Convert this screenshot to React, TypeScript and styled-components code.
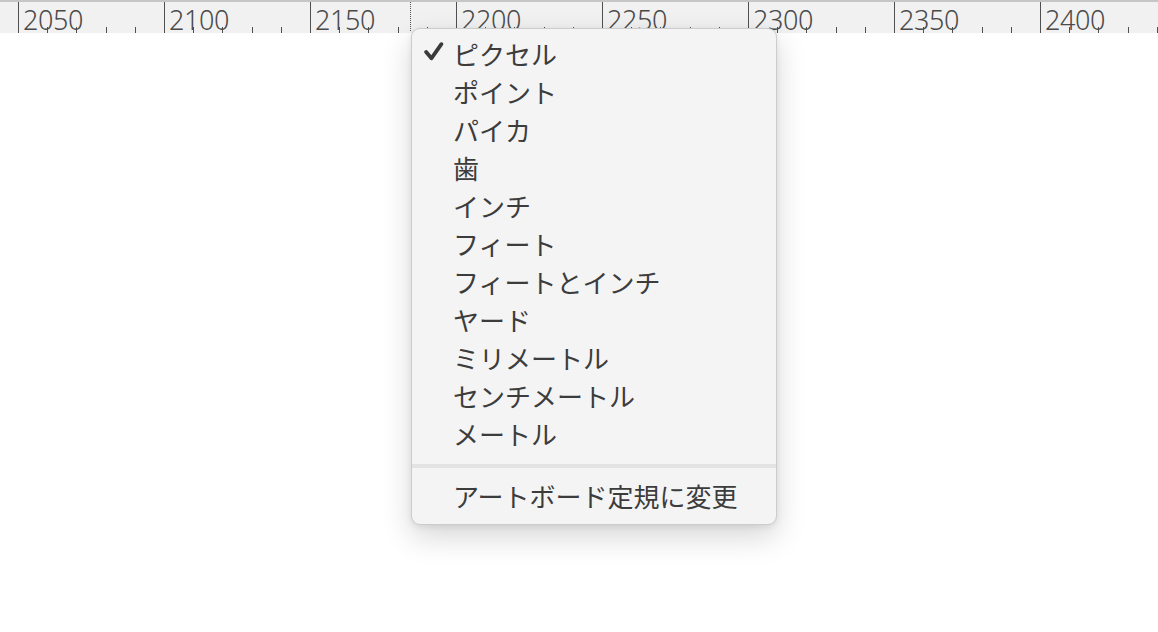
import React from "react";
import styled, { createGlobalStyle } from "styled-components";

const GlobalStyle = createGlobalStyle`
    html, body {
        margin: 0;
        padding: 0;
        background: #ffffff;
        width: 1158px;
        height: 632px;
        overflow: hidden;
    }
    body {
        font-family: "Noto Sans CJK JP", "Noto Sans", sans-serif;
    }
`;

const MAJOR = 146;
const labels = [2050, 2100, 2150, 2200, 2250, 2300, 2350, 2400];

const units = [
    "ピクセル",
    "ポイント",
    "パイカ",
    "歯",
    "インチ",
    "フィート",
    "フィートとインチ",
    "ヤード",
    "ミリメートル",
    "センチメートル",
    "メートル",
];

export default function App() {
    return (
        <>
            <GlobalStyle />
            <Page>
                <Ruler>
                    {labels.map((n) => (
                        <Segment key={n}>
                            <Label>{n}</Label>
                        </Segment>
                    ))}
                    <Cursor />
                </Ruler>
                <Menu>
                    {units.map((u, i) => (
                        <Item key={u}>
                            {i === 0 && (
                                <Check viewBox="0 0 20 20">
                                    <path d="M3 10.5 L8 16.5 L17.5 3" />
                                </Check>
                            )}
                            {u}
                        </Item>
                    ))}
                    <Separator />
                    <Item>アートボード定規に変更</Item>
                </Menu>
            </Page>
        </>
    );
}

const Page = styled.div`
    position: relative;
    width: 1158px;
    height: 632px;
    overflow: hidden;
`;

const Ruler = styled.div`
    position: relative;
    display: flex;
    height: 31px;
    padding-left: 18px;
    border-top: 2px solid #c6c6c6;
    background: #f1f1f1;
`;

const Segment = styled.div`
    flex: 0 0 ${MAJOR}px;
    display: flex;
    align-items: flex-end;
    height: 100%;
    box-sizing: border-box;
    border-left: 1px solid #505050;
    background: repeating-linear-gradient(
            to right,
            transparent 0 ${MAJOR / 5 - 1}px,
            #505050 ${MAJOR / 5 - 1}px ${MAJOR / 5}px
        )
        0 100% / 100% 6px no-repeat;
`;

const Label = styled.span`
    padding-left: 4px;
    font-family: "Noto Sans", "Liberation Sans", sans-serif;
    font-weight: 300;
    font-size: 27px;
    line-height: 27px;
    color: #4a4a4a;
    letter-spacing: -0.4px;
`;

const Cursor = styled.div`
    position: absolute;
    left: 410px;
    top: 0;
    bottom: 2px;
    border-left: 1px dotted #555;
`;

const Menu = styled.div`
    position: absolute;
    left: 411px;
    top: 28px;
    width: 366px;
    box-sizing: border-box;
    padding: 5px 0 10px;
    background: #f4f4f4;
    border-radius: 9px;
    border: 1px solid rgba(0, 0, 0, 0.16);
    box-shadow: 0 12px 30px rgba(0, 0, 0, 0.16), 0 2px 6px rgba(0, 0, 0, 0.08);
`;

const Item = styled.div`
    position: relative;
    height: 38px;
    display: flex;
    align-items: center;
    padding-left: 41px;
    font-size: 26px;
    color: #3c3c3c;
    white-space: nowrap;
`;

const Check = styled.svg`
    position: absolute;
    left: 11px;
    top: 7px;
    width: 21px;
    height: 21px;
    fill: none;
    stroke: #3a3a3a;
    stroke-width: 3.6;
    stroke-linecap: round;
    stroke-linejoin: round;
`;

const Separator = styled.div`
    height: 4px;
    margin: 12px 0 8px;
    background: #e3e3e3;
`;
